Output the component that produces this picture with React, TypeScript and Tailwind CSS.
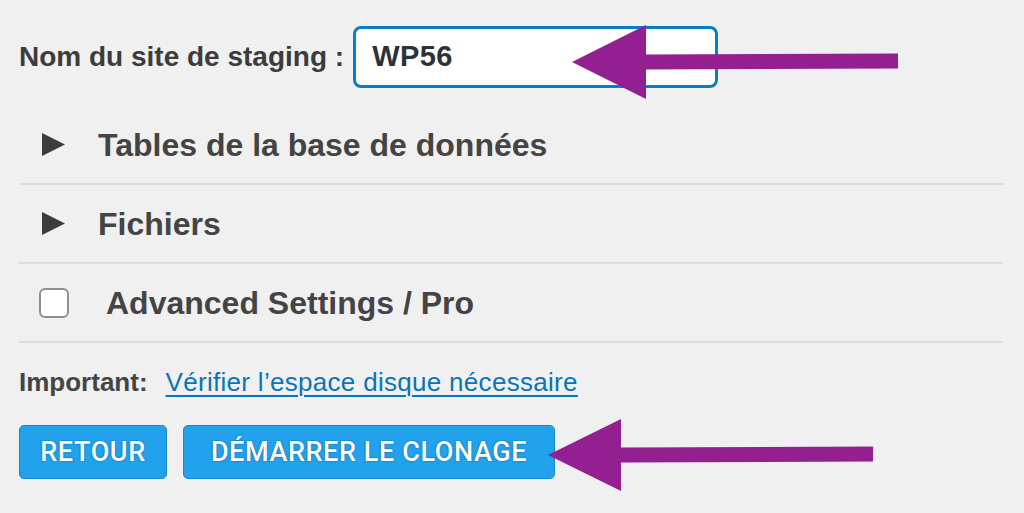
import React from 'react';

function Triangle() {
  return (
    <svg width="23" height="23" viewBox="0 0 23 23" className="shrink-0">
      <polygon points="0,0 23,11.5 0,23" fill="#3c3c3c" />
    </svg>
  );
}

function Arrow({ tipX, tipY, baseX, headHalf, tailX, thick }: { tipX: number; tipY: number; baseX: number; headHalf: number; tailX: number; thick: number }) {
  const h = thick / 2;
  const pts = [
    `${tipX},${tipY}`,
    `${baseX},${tipY - headHalf}`,
    `${baseX},${tipY - h}`,
    `${tailX},${tipY - h - 1}`,
    `${tailX},${tipY + h - 1}`,
    `${baseX},${tipY + h}`,
    `${baseX},${tipY + headHalf}`,
  ].join(' ');
  return <polygon points={pts} fill="#931f90" />;
}

export default function App() {
  return (
    <div
      className="relative w-[1024px] h-[513px] overflow-hidden bg-[#f0f0f0] text-[#3c3c3c]"
      style={{ fontFamily: '"Liberation Sans", Arial, sans-serif' }}
    >
      <div className="pl-[19px] pr-[21px] pt-[26px]">
        <div className="flex items-center">
          <span className="text-[28px] font-bold leading-none text-[#3c3c3c]">Nom du site de staging :</span>
          <div className="ml-[9px] flex h-[62px] w-[365px] items-center rounded-[8px] border-[3px] border-[#0a7ec2] bg-white pl-[16px]">
            <span className="text-[29px] font-bold tracking-[0.4px] text-[#2c3338]">WP56</span>
          </div>
        </div>

        <div className="mt-[18px]">
          <div className="flex h-[79px] items-center border-b-2 border-[#dcdcdc] pl-[23px]">
            <Triangle />
            <span className="ml-[33px] text-[32px] font-bold text-[#444]">Tables de la base de données</span>
          </div>
          <div className="flex h-[79px] items-center border-b-2 border-[#dcdcdc] pl-[23px]">
            <Triangle />
            <span className="ml-[33px] text-[32px] font-bold text-[#444]">Fichiers</span>
          </div>
          <div className="flex h-[79px] items-center border-b-2 border-[#dcdcdc] pl-[20px]">
            <div className="h-[30px] w-[30px] shrink-0 rounded-[6px] border-2 border-[#8c8f94] bg-white" />
            <span className="ml-[37px] text-[32px] font-bold text-[#444]">Advanced Settings / Pro</span>
          </div>
        </div>

        <div className="mt-[26px] flex items-center text-[26px] leading-none">
          <span className="font-bold text-[#444]">Important:</span>
          <a href="#" className="ml-[18px] tracking-[0.3px] text-[#0a74b8] underline decoration-[1.5px] underline-offset-[4px]">
            Vérifier l’espace disque nécessaire
          </a>
        </div>

        <div className="mt-[30px] flex gap-[16px]" style={{ fontFamily: 'Roboto, sans-serif' }}>
          <button className="h-[54px] w-[148px] rounded-[5px] border border-[#1a8ad0] bg-[#22a1ec] text-[27px] font-medium tracking-[0.6px] text-white [text-shadow:0_0_2px_#0a5f96]">
            RETOUR
          </button>
          <button className="h-[54px] w-[372px] rounded-[5px] border border-[#1a8ad0] bg-[#22a1ec] text-[27px] font-medium tracking-[0.6px] text-white [text-shadow:0_0_2px_#0a5f96]">
            DÉMARRER LE CLONAGE
          </button>
        </div>
      </div>

      <svg className="pointer-events-none absolute left-0 top-0" width="1024" height="513" viewBox="0 0 1024 513">
        <Arrow tipX={572} tipY={62} baseX={646} headHalf={37} tailX={898} thick={15} />
        <Arrow tipX={548} tipY={455} baseX={621} headHalf={36} tailX={873} thick={15} />
      </svg>
    </div>
  );
}
